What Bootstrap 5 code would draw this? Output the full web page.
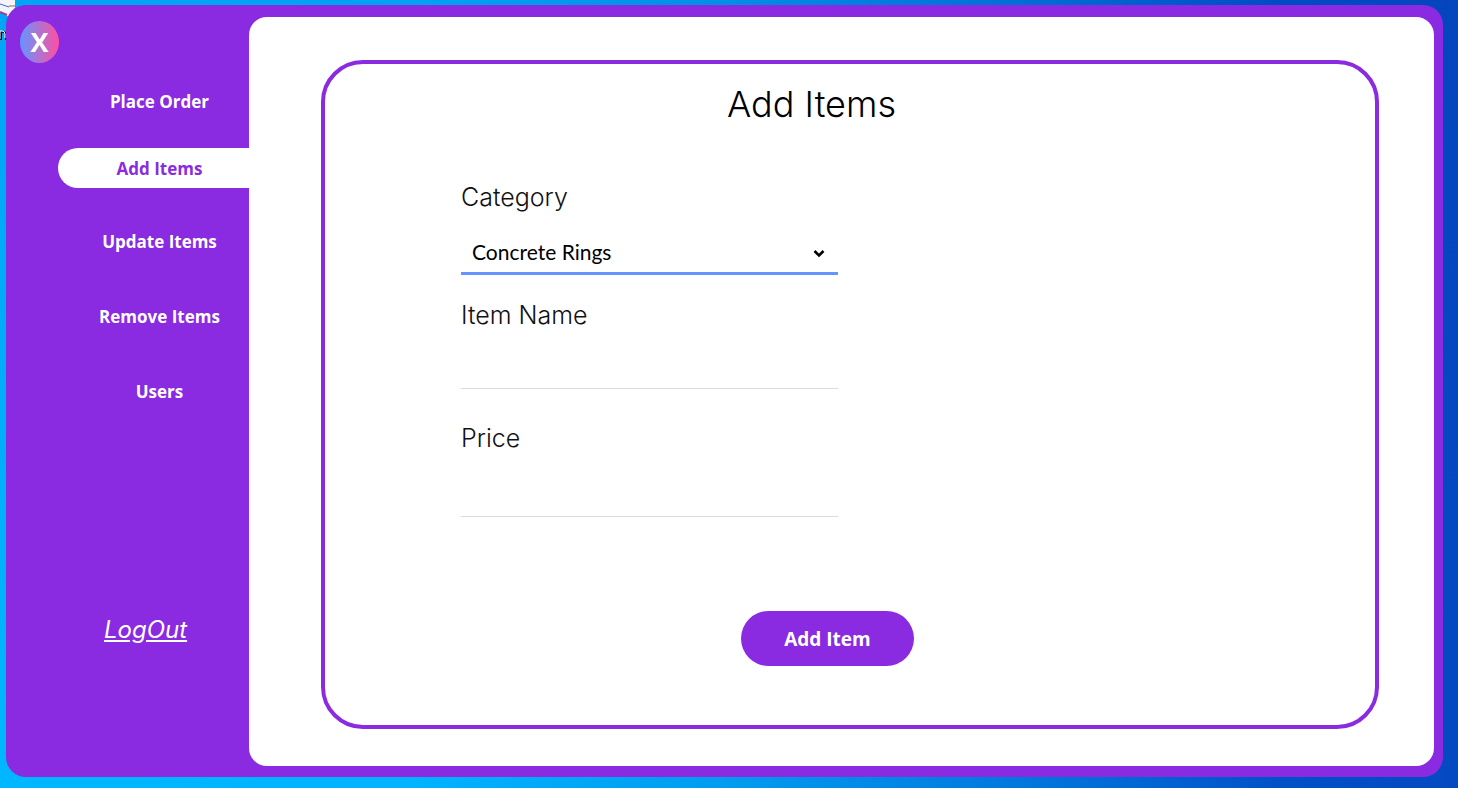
<!DOCTYPE html>
<html lang="en">
<head>
<meta charset="utf-8">
<meta name="viewport" content="width=device-width, initial-scale=1">
<title>Add Items</title>
<link href="https://cdn.jsdelivr.net/npm/bootstrap@5.3.0/dist/css/bootstrap.min.css" rel="stylesheet">
<style>
:root { --violet: #8a2be2; }
body {
  font-family: "Open Sans", "Noto Sans", sans-serif;
  background:
    linear-gradient(180deg, rgba(0, 40, 160, .12), transparent),
    linear-gradient(90deg, #00b7ff 0%, #00b4ff 28%, #009cf0 50%, #0074dc 72%, #0050c8 88%, #0549c2 100%);
  padding: 5px 15px 11px 6px;
}
.desktop-icon { left: 0; top: 0; }
.app-window { background: var(--violet); border-radius: 20px; padding: 12px 9px 11px 0; }
.side-menu { width: 243px; padding-bottom: 120px; }
.close-btn {
  width: 39px; height: 42px; margin: 4px 0 0 14px; border-radius: 50%;
  background: linear-gradient(90deg, #6495ff, #ff4fa0);
  font-size: 27px; font-weight: 700; line-height: 42px;
}
.menu-links { margin: 18px 0 0 52px; gap: 35px; }
.menu-links .nav-link {
  height: 40px; padding: 0 0 0 12px; line-height: 42px;
  font-size: 17px; font-weight: 700; color: #fff; text-align: center;
  border-radius: 20px 0 0 20px;
}
.menu-links .nav-link.active { background: #fff; color: var(--violet); margin: -8px 0 -2px; }
.logout { font: italic 24px/32px Inter, sans-serif; margin-left: 98px; color: #fff; }
.content { background: #fff; border-radius: 18px; padding: 43px 55px 37px 72px; }
.form-frame { border: 4px solid var(--violet); border-radius: 42px; padding: 18px 0 59px; }
.page-title { font: 300 36px/44px Inter, sans-serif; color: #000; padding-right: 77px; }
.item-form { font-family: Inter, sans-serif; }
.fields { width: 377px; margin: 55px 0 0 136px; }
.fields .form-label { font-size: 25px; font-weight: 300; line-height: 32px; color: #111; }
.fields .form-select, .fields .form-control {
  border: 0; border-bottom: 1px solid #dcdce0; border-radius: 0; background-color: transparent;
}
.fields .form-control { height: 42px; }
.fields .form-select {
  height: 44px; border-bottom: 3px solid #6495ff; font-family: Lato, sans-serif; font-size: 21px; color: #000;
  background-image: none; padding: 0 40px 0 11px;
}
.select-wrap { margin-top: 18px; }
.price-group { margin-top: 33px; }
.price-group .form-control { margin-top: 21px; }
.chevron { right: 13px; top: 18px; }
.submit-btn {
  width: 173px; height: 55px; border-radius: 28px; background: var(--violet); color: #fff;
  font: 700 19px/28px "Open Sans", sans-serif;
}
.form-actions { padding-right: 45px; }
</style>
</head>
<body class="d-flex min-vh-100">
<svg class="desktop-icon position-absolute" width="16" height="42" aria-hidden="true">
  <path d="M0 0h15v8l-6 9-9-5z" fill="#f4f4fa"/><path d="M0 4l9 3M9 6h6" stroke="#4169d0" stroke-width="1"/>
  <path d="M10 6h5" stroke="#f0b060"/><path d="M0 12l7 3" stroke="#a04090" stroke-width="2"/>
  <path d="M1 40v-8h2q3 0 3 3v5" stroke="#012" stroke-width="2" fill="none"/>
  <path d="M0 39v-8h2q3 0 3 3v4" stroke="#fff" stroke-width="1" fill="none"/>
</svg>
<div class="app-window d-flex flex-grow-1 position-relative">
  <aside class="side-menu d-flex flex-column flex-shrink-0">
    <button type="button" class="close-btn btn p-0 border-0 text-white" aria-label="Close">X</button>
    <nav class="menu-links nav flex-column">
      <a class="nav-link" href="#">Place Order</a>
      <a class="nav-link active" aria-current="page" href="#">Add Items</a>
      <a class="nav-link" href="#">Update Items</a>
      <a class="nav-link" href="#">Remove Items</a>
      <a class="nav-link" href="#">Users</a>
    </nav>
    <a class="logout mt-auto" href="#">LogOut</a>
  </aside>
  <main class="content flex-grow-1 d-flex">
    <form class="form-frame item-form flex-grow-1 d-flex flex-column">
      <h1 class="page-title text-center m-0">Add Items</h1>
      <div class="fields">
        <label class="form-label d-block m-0" for="category">Category</label>
        <div class="select-wrap position-relative">
          <select class="form-select" id="category"><option>Concrete Rings</option></select>
          <svg class="chevron position-absolute pe-none" width="12" height="9" viewBox="0 0 12 9" aria-hidden="true"><path d="M1.500 2l4.500 4.500L10.500 2" fill="none" stroke="#000" stroke-width="2.600"/></svg>
        </div>
        <label class="form-label d-block mb-0 mt-4" for="item-name">Item Name</label>
        <input class="form-control mt-3" id="item-name" type="text">
        <div class="price-group">
          <label class="form-label d-block m-0" for="price">Price</label>
          <input class="form-control" id="price" type="text">
        </div>
      </div>
      <div class="form-actions mt-auto d-flex justify-content-center">
        <button type="submit" class="submit-btn btn border-0 p-0">Add Item</button>
      </div>
    </form>
  </main>
</div>
<script src="https://cdn.jsdelivr.net/npm/bootstrap@5.3.0/dist/js/bootstrap.bundle.min.js"></script>
</body>
</html>
